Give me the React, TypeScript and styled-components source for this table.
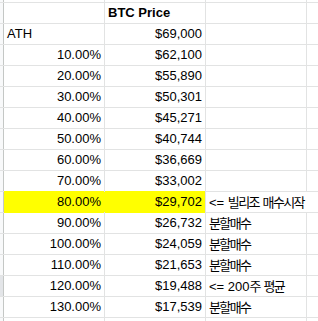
import * as React from 'react';
import styled, { createGlobalStyle } from 'styled-components';

const GlobalStyle = createGlobalStyle`
  html, body {
    margin: 0;
    padding: 0;
    background: #fff;
  }
  body {
    width: 318px;
    height: 321px;
    overflow: hidden;
  }
`;

// gridlines come from the container background showing through the 1px gaps
const Sheet = styled.div`
  display: grid;
  grid-template-columns: 3px 100px 100px 100px 1fr;
  grid-template-rows: 2px repeat(15, 20px) 3px;
  gap: 1px;
  height: 321px;
  overflow: hidden;
  background: #e2e3e3;
  font-family: 'Liberation Sans', Arial, 'Noto Sans CJK KR', sans-serif;
  font-size: 13px;
  color: #000;
`;

const RowHead = styled.div<{ $active?: boolean }>`
  background: ${p => (p.$active ? '#e3e5e8' : '#f8f9fa')};
  box-shadow: 1px 0 0 #c4c7c5;
`;

const Cell = styled.div<{ $align?: 'left' | 'right'; $bold?: boolean; $fill?: string; $span?: number; $edge?: boolean }>`
  grid-column: span ${p => p.$span ?? 1};
  background: ${p => p.$fill ?? '#fff'};
  box-shadow: ${p =>
    p.$fill
      ? `0 -1px 0 ${p.$fill}, 0 1px 0 ${p.$fill}${p.$edge ? `, 1px 0 0 ${p.$fill}` : ''}`
      : 'none'};
  padding: 0 3px;
  line-height: 20px;
  text-align: ${p => p.$align ?? 'left'};
  font-weight: ${p => (p.$bold ? 700 : 400)};
  white-space: nowrap;
  overflow: hidden;
`;

const Hangul = styled.span`
  font-family: 'Noto Sans CJK KR', sans-serif;
  letter-spacing: -1.6px;
`;

function Note({ text }: { text: string }) {
  return (
    <>
      {text.split(/([가-힣]+)/).map((part, i) =>
        /[가-힣]/.test(part) ? <Hangul key={i}>{part}</Hangul> : part
      )}
    </>
  );
}

interface Row {
  label: string;
  price: string;
  note?: string;
  wide?: boolean;
  highlight?: boolean;
  active?: boolean;
}

const rows: Row[] = [
  { label: 'ATH', price: '$69,000' },
  { label: '10.00%', price: '$62,100' },
  { label: '20.00%', price: '$55,890' },
  { label: '30.00%', price: '$50,301' },
  { label: '40.00%', price: '$45,271' },
  { label: '50.00%', price: '$40,744' },
  { label: '60.00%', price: '$36,669' },
  { label: '70.00%', price: '$33,002' },
  { label: '80.00%', price: '$29,702', note: '<= 빌리조 매수시작', wide: true, highlight: true },
  { label: '90.00%', price: '$26,732', note: '분할매수' },
  { label: '100.00%', price: '$24,059', note: '분할매수' },
  { label: '110.00%', price: '$21,653', note: '분할매수' },
  { label: '120.00%', price: '$19,488', note: '<= 200주 평균', active: true },
  { label: '130.00%', price: '$17,539', note: '분할매수' },
];

const YELLOW = '#ffff00';

function EmptyRow() {
  return (
    <>
      <RowHead />
      <Cell />
      <Cell />
      <Cell />
      <Cell />
    </>
  );
}

export default function App(): React.ReactElement {
  return (
    <>
      <GlobalStyle />
      <Sheet>
        <EmptyRow />

        <RowHead />
        <Cell />
        <Cell $bold>BTC Price</Cell>
        <Cell />
        <Cell />

        {rows.map(row => {
          const fill = row.highlight ? YELLOW : undefined;
          return (
            <React.Fragment key={row.label}>
              <RowHead $active={row.active} />
              <Cell $align={row.label === 'ATH' ? 'left' : 'right'} $fill={fill} $edge>
                {row.label}
              </Cell>
              <Cell $align="right" $fill={fill}>
                {row.price}
              </Cell>
              <Cell $span={row.wide ? 2 : 1}>{row.note && <Note text={row.note} />}</Cell>
              {!row.wide && <Cell />}
            </React.Fragment>
          );
        })}

        <EmptyRow />
      </Sheet>
    </>
  );
}
